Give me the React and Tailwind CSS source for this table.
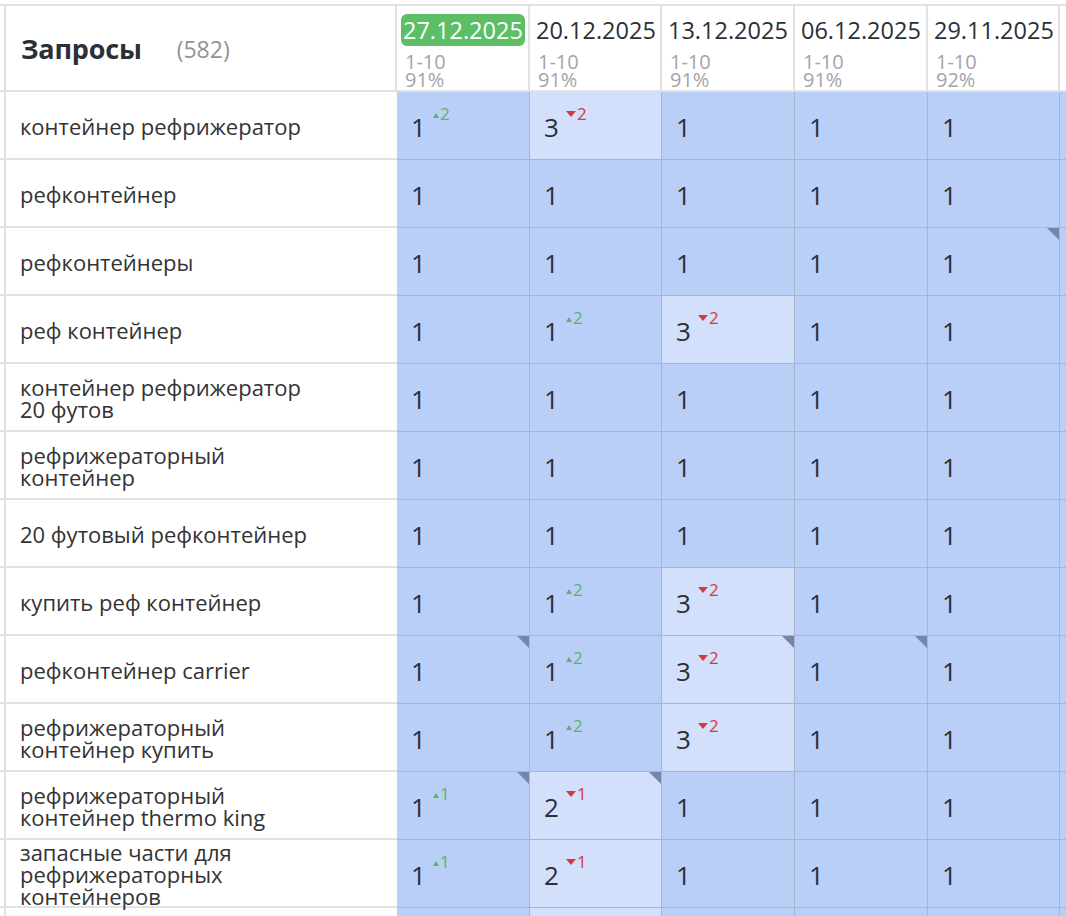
import React from "react";

const dates = [
  { d: "27.12.2025", r: "1-10", p: "91%", current: true },
  { d: "20.12.2025", r: "1-10", p: "91%" },
  { d: "13.12.2025", r: "1-10", p: "91%" },
  { d: "06.12.2025", r: "1-10", p: "91%" },
  { d: "29.11.2025", r: "1-10", p: "92%" },
  { d: "22.11.2025", r: "1-10", p: "92%" },
];

// v = position, ch = change, l = light cell, m = corner mark
const rows = [
  { q: "контейнер рефрижератор", c: [{ v: 1, ch: 2 }, { v: 3, ch: -2, l: 1 }, { v: 1 }, { v: 1 }, { v: 1 }, { v: 1 }] },
  { q: "рефконтейнер", c: [{ v: 1 }, { v: 1 }, { v: 1 }, { v: 1 }, { v: 1 }, { v: 1 }] },
  { q: "рефконтейнеры", c: [{ v: 1 }, { v: 1 }, { v: 1 }, { v: 1 }, { v: 1, m: 1 }, { v: 1 }] },
  { q: "реф контейнер", c: [{ v: 1 }, { v: 1, ch: 2 }, { v: 3, ch: -2, l: 1 }, { v: 1 }, { v: 1 }, { v: 1 }] },
  { q: "контейнер рефрижератор 20 футов", c: [{ v: 1 }, { v: 1 }, { v: 1 }, { v: 1 }, { v: 1 }, { v: 1 }] },
  { q: "рефрижераторный контейнер", c: [{ v: 1 }, { v: 1 }, { v: 1 }, { v: 1 }, { v: 1 }, { v: 1 }] },
  { q: "20 футовый рефконтейнер", c: [{ v: 1 }, { v: 1 }, { v: 1 }, { v: 1 }, { v: 1 }, { v: 1 }] },
  { q: "купить реф контейнер", c: [{ v: 1 }, { v: 1, ch: 2 }, { v: 3, ch: -2, l: 1 }, { v: 1 }, { v: 1 }, { v: 1 }] },
  { q: "рефконтейнер carrier", c: [{ v: 1, m: 1 }, { v: 1, ch: 2 }, { v: 3, ch: -2, l: 1, m: 1 }, { v: 1, m: 1 }, { v: 1 }, { v: 1 }] },
  { q: "рефрижераторный контейнер купить", c: [{ v: 1 }, { v: 1, ch: 2 }, { v: 3, ch: -2, l: 1 }, { v: 1 }, { v: 1 }, { v: 1 }] },
  { q: "рефрижераторный контейнер thermo king", c: [{ v: 1, ch: 1, m: 1 }, { v: 2, ch: -1, l: 1, m: 1 }, { v: 1 }, { v: 1 }, { v: 1 }, { v: 1 }] },
  { q: "запасные части для рефрижераторных контейнеров", c: [{ v: 1, ch: 1 }, { v: 2, ch: -1, l: 1 }, { v: 1 }, { v: 1 }, { v: 1 }, { v: 1 }] },
  { q: "рефконтейнер б/у", c: [{ v: 1 }, { v: 2, l: 1 }, { v: 1 }, { v: 1 }, { v: 1 }, { v: 1 }] },
];

const colW = ["w-[133px]", "w-[132px]", "w-[133px]", "w-[133px]", "w-[132px]", "w-[133px]"];

function Change({ ch }) {
  if (!ch) return null;
  const up = ch > 0;
  return (
    <span className={`relative -top-[13px] ml-[7px] inline-flex items-end text-[17px] leading-[17px] ${up ? "text-[#5bb467]" : "text-[#d8393c]"}`}>
      {up ? (
        <svg width="6" height="5" viewBox="0 0 6 5" className="mb-[4px] mr-[1px]">
          <path d="M3 0 L6 5 L0 5 Z" fill="#5bb467" />
        </svg>
      ) : (
        <svg width="10" height="6" viewBox="0 0 10 6" className="mb-[5px] mr-[1px]">
          <path d="M0 0 L10 0 L5 6 Z" fill="#d8393c" />
        </svg>
      )}
      {Math.abs(ch)}
    </span>
  );
}

function Cell({ cell, w }) {
  return (
    <div
      className={`relative ${w} shrink-0 h-full flex items-center pl-[14px] pt-[2px] border-r border-b border-[#a9b5c9] ${cell.l ? "bg-[#d2e0fb]" : "bg-[#b9cff8]"}`}
    >
      <span className="text-[26px] leading-none text-[#2a2f38]">{cell.v}</span>
      <Change ch={cell.ch} />
      {cell.m ? (
        <svg width="12" height="12" viewBox="0 0 12 12" className="absolute top-0 right-0">
          <path d="M0 0 L12 0 L12 12 Z" fill="#7587a9" />
        </svg>
      ) : null}
    </div>
  );
}

export default function App() {
  return (
    <div
      className="w-[1066px] h-[916px] overflow-hidden bg-white text-[#333]"
      style={{ fontFamily: '"Open Sans", "Noto Sans", sans-serif' }}
    >
      <div className="pt-[4px] w-[1200px]">
        {/* header */}
        <div className="flex h-[88px] border-t-2 border-b-2 border-[#e2e2e2]">
          <div className="w-[6px] shrink-0 border-r-2 border-[#e2e2e2]" />
          <div className="w-[391px] shrink-0 flex items-center pl-[15px] pt-[2px] border-r-2 border-[#e2e2e2]">
            <span className="text-[27px] font-bold text-[#2b2f36] tracking-[-0.2px]">Запросы</span>
            <span className="ml-[35px] text-[23px] text-[#8f949c]">(582)</span>
          </div>
          {dates.map((d, i) => (
            <div key={d.d} className={`${colW[i]} shrink-0 pt-[8px] pl-[4px] border-r-2 border-[#e2e2e2]`}>
              <span
                className={`inline-block h-[32px] leading-[32px] px-[2px] rounded-[6px] text-[23.5px] whitespace-nowrap ${d.current ? "bg-[#5cbf66] text-white" : "text-[#2b2f36]"}`}
              >
                {d.d}
              </span>
              <div className="mt-[7px] pl-[4px] text-[20px] leading-[18px] text-[#a2a5ab]">
                <div>{d.r}</div>
                <div>{d.p}</div>
              </div>
            </div>
          ))}
        </div>
        {/* rows */}
        {rows.map((row) => (
          <div key={row.q} className="flex h-[68px]">
            <div className="w-[6px] shrink-0 border-r-2 border-b-2 border-[#e2e2e2]" />
            <div className="w-[391px] shrink-0 flex items-center pl-[14px] pt-[2px] border-b-2 border-[#e2e2e2]">
              <span className="max-w-[305px] text-[22px] leading-[22px] text-[#333]">{row.q}</span>
            </div>
            {row.c.map((cell, i) => (
              <Cell key={i} cell={cell} w={colW[i]} />
            ))}
          </div>
        ))}
      </div>
    </div>
  );
}
